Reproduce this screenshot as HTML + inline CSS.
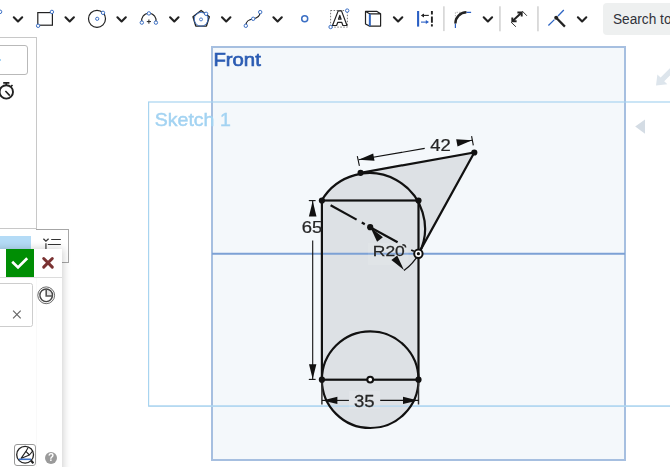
<!DOCTYPE html>
<html>
<head>
<meta charset="utf-8">
<title>Sketch</title>
<style>
html,body{margin:0;padding:0;}
body{width:670px;height:467px;overflow:hidden;background:#fff;position:relative;font-family:"Liberation Sans",sans-serif;}
#cv{position:absolute;left:0;top:0;width:670px;height:467px;will-change:transform;}
#help{will-change:transform;}
.abs{position:absolute;}
#toolbar{position:absolute;left:0;top:0;width:670px;height:37px;background:#fff;}
#search{position:absolute;left:603px;top:3px;width:80px;height:32px;background:#eef0f0;border-radius:4px;}
#search span{position:absolute;left:9.8px;top:6.5px;font-size:15.2px;color:#30323a;white-space:nowrap;transform:scaleX(0.9);transform-origin:0 0;}
#panel{position:absolute;left:-10px;top:37px;width:47px;height:192px;border:1px solid #c8c8c8;background:#fff;box-sizing:border-box;}
#inp1{position:absolute;left:-10px;top:45px;width:38px;height:30px;border:1px solid #b9b9b9;border-radius:3px;box-sizing:border-box;background:#fff;}
#tab{position:absolute;left:36px;top:229px;width:33px;height:34px;border:1px solid #a6a6a6;border-left:none;box-sizing:border-box;background:#fff;}
#bluebar{position:absolute;left:0;top:236px;width:31px;height:13px;background:#b4dbf6;}
#popup{position:absolute;left:-10px;top:249px;width:72px;height:230px;background:#fff;box-shadow:1px 0 8px rgba(0,0,0,0.2);}
#ok{position:absolute;left:6px;top:249px;width:28px;height:28px;background:#008e04;}
#sep{position:absolute;left:0;top:277px;width:62px;height:1px;background:#dcdcdc;}
#inp2{position:absolute;left:-10px;top:283px;width:43px;height:43.5px;border:1px solid #cdcdcd;border-radius:2.5px;box-sizing:border-box;background:#fff;}
#ibtn{position:absolute;left:14px;top:444px;width:22px;height:22px;border:1px solid #999;border-radius:3px;box-sizing:border-box;background:#fff;}
#help{position:absolute;left:45px;top:451.7px;width:12px;height:12px;border-radius:6px;background:#9a9a9a;color:#fff;font-size:10px;font-weight:bold;line-height:12px;text-align:center;}
</style>
</head>
<body>
<!-- ============ CANVAS ============ -->
<svg id="cv" width="670" height="467" viewBox="0 0 670 467">
  <!-- Front plane -->
  <rect x="212" y="47" width="413" height="413" fill="#f4f8fb" stroke="#a6bfe0" stroke-width="2"/>
  <!-- Sketch plane -->
  <rect x="148.6" y="102" width="540" height="304.1" fill="none" stroke="#a8d4f0" stroke-width="1.2"/>
  <text transform="translate(213.4,66.2) scale(1.07,1)" font-size="19" fill="#2b5cb3" stroke="#2b5cb3" stroke-width="0.7" font-family="Liberation Sans, sans-serif">Front</text>
  <text transform="translate(154.8,125.5) scale(1.085,1)" font-size="18" fill="#a3d3f2" stroke="#a3d3f2" stroke-width="0.45" font-family="Liberation Sans, sans-serif">Sketch 1</text>
  <!-- view arrows right -->
  <path d="M656 85.4 L657.4 74.6 L660.6 77.6 L670.6 67.6 L674.2 71.2 L664.2 81.2 L667.4 84.2 Z" fill="#dde5ec"/>
  <path d="M635.2 126.6 L645 119.6 L645 133.8 Z" fill="#d4dce4"/>

  <!-- filled regions -->
  <g fill="#dde1e5" stroke="none">
    <rect x="321.9" y="200.5" width="96.6" height="179.2"/>
    <circle cx="370.2" cy="379.7" r="48.3"/>
    <path d="M321.7 200.4 A55.5 55.5 0 0 1 418.9 253.9 Z"/>
    <path d="M360.6 172.8 L474.3 152.5 L418.5 253.6 L418.5 200 Z"/>
  </g>
  <!-- horizontal axis -->
  <line x1="212" y1="253.8" x2="625" y2="253.8" stroke="#7ca1d5" stroke-width="1.9"/>
  <!-- sketch bottom edge over fill -->
  <line x1="148.6" y1="406.1" x2="670" y2="406.1" stroke="#b0d6f0" stroke-width="1.3"/>

  <!-- geometry -->
  <g fill="none" stroke="#111" stroke-width="2.2" stroke-linecap="round">
    <rect x="321.9" y="200.5" width="96.6" height="179.2"/>
    <circle cx="370.2" cy="379.7" r="48.3"/>
    <path d="M321.7 200.4 A55.5 55.5 0 0 1 418.9 253.9"/>
    <path d="M360.6 172.8 L474.3 152.5 L418.5 253.6"/>
  </g>
  <!-- construction line -->
  <g stroke="#111" stroke-width="2.2" stroke-linecap="butt">
    <line x1="330.6" y1="205.2" x2="356.6" y2="219.6"/>
    <line x1="361.8" y1="222.5" x2="364.8" y2="224.2"/>
    <line x1="370.2" y1="227.2" x2="397.6" y2="242.2"/>
    <line x1="411.2" y1="249.9" x2="413.9" y2="251.3" stroke-width="1.7"/>
    <path d="M402.4 244.7 Q405.4 244.6 405.7 247.5" fill="none" stroke-width="1.5"/>
  </g>

  <!-- dimension 42 -->
  <g stroke="#111" stroke-width="1.1" fill="none">
    <line x1="357.3" y1="156.2" x2="359.4" y2="165.8"/>
    <line x1="471.6" y1="136.1" x2="473.3" y2="145.4"/>
    <line x1="358.6" y1="159.8" x2="424.7" y2="148.4"/>
    <line x1="457" y1="142.8" x2="472.1" y2="140.2"/>
  </g>
  <path d="M358.6 159.8 L373.2 153.5 L374.5 160.8 Z" fill="#111"/>
  <path d="M472.1 140.2 L457.5 146.5 L456.2 139.2 Z" fill="#111"/>
  <text transform="translate(440.5,151.1) scale(1.12,1)" font-size="16.5" text-anchor="middle" fill="#262626" stroke="#262626" stroke-width="0.25" font-family="Liberation Sans, sans-serif">42</text>

  <!-- dimension 65 -->
  <g stroke="#111" stroke-width="1.1" fill="none">
    <line x1="308.8" y1="200.6" x2="315.6" y2="200.6"/>
    <line x1="308.8" y1="379.4" x2="315.6" y2="379.4"/>
    <line x1="312.7" y1="200.6" x2="312.7" y2="214"/>
    <line x1="312.7" y1="240.6" x2="312.7" y2="379.4"/>
  </g>
  <path d="M312.7 201 L316.5 216.4 L308.9 216.4 Z" fill="#111"/>
  <path d="M312.7 379 L309.0 364.2 L316.4 364.2 Z" fill="#111"/>
  <text transform="translate(312.1,232.5) scale(1.12,1)" font-size="16.5" text-anchor="middle" fill="#262626" stroke="#262626" stroke-width="0.25" font-family="Liberation Sans, sans-serif">65</text>

  <!-- dimension 35 -->
  <rect x="349" y="391" width="31" height="18" fill="rgba(255,255,255,0.12)"/>
  <g stroke="#111" stroke-width="1.1" fill="none">
    <line x1="321.9" y1="381" x2="321.9" y2="404.5" stroke="#333" stroke-width="1.5"/>
    <line x1="418.5" y1="381" x2="418.5" y2="404.5" stroke="#333" stroke-width="1.5"/>
    <line x1="322" y1="400.4" x2="348.9" y2="400.4"/>
    <line x1="380.2" y1="400.4" x2="418.5" y2="400.4"/>
  </g>
  <path d="M322.4 400.4 L337.4 396.8 L337.4 404.0 Z" fill="#111"/>
  <path d="M418 400.4 L403 404.0 L403 396.8 Z" fill="#111"/>
  <text transform="translate(364.3,406.6) scale(1.08,1)" font-size="17.2" text-anchor="middle" fill="#262626" stroke="#262626" stroke-width="0.25" font-family="Liberation Sans, sans-serif">35</text>

  <!-- R20 -->
  <path d="M418.9 253.9 A55.5 55.5 0 0 1 404 270.6" fill="none" stroke="#111" stroke-width="1.2"/>
  <rect x="368" y="243" width="40.5" height="22" fill="rgba(255,255,255,0.1)"/>
  <path d="M370.4 227.3 L382.9 237.2 L377.1 241.8 Z" fill="#111"/>
  <path d="M403.9 270.0 L391.4 260.1 L397.2 255.5 Z" fill="#111"/>
  <text transform="translate(388.8,256.2) scale(1.14,1)" font-size="15.3" text-anchor="middle" fill="#262626" stroke="#262626" stroke-width="0.25" font-family="Liberation Sans, sans-serif">R20</text>

  <!-- points -->
  <g fill="#111">
    <circle cx="321.9" cy="200.5" r="3.1"/>
    <circle cx="418.5" cy="200.5" r="3.1"/>
    <circle cx="360.6" cy="172.8" r="3.1"/>
    <circle cx="474.3" cy="152.5" r="3.1"/>
    <circle cx="370.2" cy="227.2" r="3.1"/>
    <circle cx="321.9" cy="379.7" r="3.1"/>
    <circle cx="418.5" cy="379.7" r="3.1"/>
  </g>
  <circle cx="370.2" cy="379.6" r="2.9" fill="#fff" stroke="#111" stroke-width="2.1"/>
  <!-- origin -->
  <circle cx="418.4" cy="253.7" r="4.2" fill="#fff" stroke="#111" stroke-width="2"/>
  <circle cx="418.4" cy="253.7" r="1.6" fill="#111"/>
</svg>

<!-- ============ TOOLBAR ============ -->
<div id="toolbar"></div>
<div id="search"><span>Search tools...</span></div>
<svg class="abs" style="left:0;top:0" width="670" height="37" viewBox="0 0 670 37">
  <defs>
    <path id="chev" d="M-4.2 -2.2 L0 2 L4.2 -2.2" fill="none" stroke="#222" stroke-width="2.1" stroke-linecap="round" stroke-linejoin="round"/>
  </defs>
  <use href="#chev" x="18" y="19.5"/>
  <use href="#chev" x="69.7" y="19.5"/>
  <use href="#chev" x="121.6" y="19.5"/>
  <use href="#chev" x="174.3" y="19.5"/>
  <use href="#chev" x="226.2" y="19.5"/>
  <use href="#chev" x="277.6" y="19.5"/>
  <use href="#chev" x="398.1" y="19.5"/>
  <use href="#chev" x="487.9" y="19.5"/>
  <use href="#chev" x="582.1" y="19.5"/>
  <!-- partial icon at far left -->
  <circle cx="0" cy="11.8" r="1.8" fill="#fff" stroke="#3b6fc4" stroke-width="1"/>
  <!-- rectangle -->
  <rect x="37.8" y="12.6" width="14.6" height="12.6" fill="none" stroke="#222" stroke-width="1.2"/>
  <circle cx="51.9" cy="11.9" r="1.7" fill="#fff" stroke="#3b6fc4" stroke-width="1"/>
  <circle cx="38.1" cy="25.8" r="1.7" fill="#fff" stroke="#3b6fc4" stroke-width="1"/>
  <!-- circle -->
  <circle cx="97" cy="18.8" r="8.5" fill="none" stroke="#222" stroke-width="1.2"/>
  <circle cx="97.2" cy="18.8" r="1.6" fill="#fff" stroke="#3b6fc4" stroke-width="1"/>
  <circle cx="103" cy="12.8" r="1.7" fill="#fff" stroke="#3b6fc4" stroke-width="1"/>
  <!-- arc -->
  <path d="M141.8 22.5 A7.3 7.3 0 1 1 155.9 22.5" fill="none" stroke="#222" stroke-width="1.1"/>
  <circle cx="141.8" cy="22.6" r="1.7" fill="#fff" stroke="#3b6fc4" stroke-width="1"/>
  <circle cx="155.9" cy="22.6" r="1.7" fill="#fff" stroke="#3b6fc4" stroke-width="1"/>
  <circle cx="148.9" cy="13.4" r="1.7" fill="#fff" stroke="#3b6fc4" stroke-width="1"/>
  <path d="M146.8 21.6 H151 M148.9 19.5 V23.7" stroke="#222" stroke-width="1" fill="none"/>
  <!-- polygon -->
  <path d="M201.1 10.5 L209.3 16.8 L206.4 26.1 L195.8 26.1 L193 16.8 Z" fill="none" stroke="#222" stroke-width="1.4" stroke-linejoin="round"/>
  <circle cx="201.1" cy="19.3" r="6.9" fill="none" stroke="#3b6fc4" stroke-width="0.9"/>
  <circle cx="201" cy="19.4" r="1.5" fill="#fff" stroke="#3b6fc4" stroke-width="0.9"/>
  <circle cx="206.1" cy="13.8" r="1.7" fill="#fff" stroke="#3b6fc4" stroke-width="1"/>
  <!-- spline -->
  <path d="M245.9 25.6 C246 20.5 249 19.4 253.1 18.8 C257.5 18.2 259.8 16.5 260.1 12.2" fill="none" stroke="#222" stroke-width="1.2"/>
  <circle cx="245.8" cy="25.8" r="1.7" fill="#fff" stroke="#3b6fc4" stroke-width="1"/>
  <circle cx="253.2" cy="18.8" r="1.7" fill="#fff" stroke="#3b6fc4" stroke-width="1"/>
  <circle cx="260.2" cy="12.1" r="1.7" fill="#fff" stroke="#3b6fc4" stroke-width="1"/>
  <!-- point -->
  <circle cx="304.7" cy="18.8" r="3" fill="#fff" stroke="#3b6fc4" stroke-width="1.5"/>
  <!-- text -->
  <rect x="330.6" y="10.5" width="16.8" height="16.6" fill="none" stroke="#555" stroke-width="0.8" stroke-dasharray="1.5 1.5"/>
  <path d="M332.5 25.5 L338.2 10.9 L341.5 10.9 L347 25.5 L342.9 25.5 L341.7 22.3 L337.8 22.3 L336.6 25.5 Z M338.5 19.2 L339.8 15.4 L341.1 19.2 Z" fill="#fff" fill-rule="evenodd" stroke="#222" stroke-width="1.2" stroke-linejoin="round"/>
  <circle cx="347.2" cy="10.6" r="1.7" fill="#fff" stroke="#3b6fc4" stroke-width="1"/>
  <circle cx="330.6" cy="27" r="1.7" fill="#fff" stroke="#3b6fc4" stroke-width="1"/>
  <!-- use/cube -->
  <path d="M365.5 11.4 L377 11.4 L380.6 13.8 L380.6 26.1 L369.7 26.1 L365.5 24 Z M365.5 11.4 L369.7 13.8 L380.6 13.8 M369.7 13.8 L369.7 26.1" fill="none" stroke="#222" stroke-width="1.2" stroke-linejoin="round"/>
  <path d="M369.8 14 L369.8 26" stroke="#2f66c4" stroke-width="1.9"/>
  <!-- linear pattern -->
  <path d="M418.1 11 V26.6" stroke="#2a5fc4" stroke-width="2.1" fill="none"/>
  <path d="M431.9 11 V14.5 M431.9 16.4 V22.8 M431.9 24.2 V26.6" stroke="#222" stroke-width="1.9" fill="none"/>
  <path d="M422 15.4 H428.8" stroke="#222" stroke-width="1.1" fill="none"/>
  <path d="M420.8 15.4 L424 13.4 L424 17.4 Z" fill="#222"/>
  <path d="M421 22.1 H427.6" stroke="#2a5fc4" stroke-width="1.1" fill="none"/>
  <path d="M429 22.1 L425.8 20.1 L425.8 24.1 Z" fill="#2a5fc4"/>
  <!-- separators -->
  <rect x="443.2" y="6.3" width="1.4" height="24.8" fill="#cfcfcf"/>
  <rect x="499.3" y="6.3" width="1.3" height="25" fill="#c9c9c9"/>
  <rect x="537.3" y="6.3" width="1.3" height="25" fill="#c9c9c9"/>
  <!-- fillet -->
  <path d="M455.4 21.5 V12.3 H464" stroke="#888" stroke-width="0.7" stroke-dasharray="1.3 1.3" fill="none"/>
  <path d="M455.4 27.9 V23.5 M466.4 12.3 H471.1" stroke="#2a5fc4" stroke-width="1.2" fill="none"/>
  <path d="M455.4 23.5 A11.1 11.1 0 0 1 466.4 12.3" stroke="#222" stroke-width="2.4" fill="none"/>
  <!-- transform -->
  <path d="M512.6 21 L521.4 12.8" stroke="#222" stroke-width="2" fill="none"/>
  <path d="M512.3 17.4 V21.3 H516.6 M517.4 12.5 H521.7 V16.6" stroke="#222" stroke-width="1.9" fill="none" stroke-linejoin="miter"/>
  <path d="M511 22.1 L515.9 26.8 M522.2 11 L526.9 15.8" stroke="#222" stroke-width="0.9" fill="none"/>
  <!-- trim -->
  <path d="M548.4 25.5 L554.4 19.6 M558 16 L563.8 10" stroke="#2f66c4" stroke-width="1.3" fill="none"/>
  <path d="M556.2 17.8 L564.9 26.6" stroke="#222" stroke-width="2.3" fill="none"/>
  <circle cx="556.2" cy="17.8" r="2" fill="#222"/>
</svg>

<!-- ============ LEFT PANEL ============ -->
<div id="panel"></div>
<div id="inp1"></div>
<div class="abs" style="left:0;top:59px;width:1px;height:1.5px;background:#a8d4f3;"></div>
<svg class="abs" style="left:0;top:80px" width="20" height="24" viewBox="0 80 20 24">
  <circle cx="6.3" cy="91.9" r="6.7" fill="none" stroke="#222" stroke-width="1.9"/>
  <path d="M3.2 82.9 H9.4 M6.3 82.9 V85.5 M5.4 91 L9.8 95.6 M10.9 86.6 L12.5 85" stroke="#222" stroke-width="1.6" fill="none"/>
</svg>
<div id="tab"></div>
<svg class="abs" style="left:36px;top:229px" width="34" height="34" viewBox="36 229 34 34">
  <path d="M51.2 239.5 H60.8 M47.8 244.5 H60.8" stroke="#333" stroke-width="1.2" fill="none"/>
  <path d="M43.4 238.8 L45.9 241.2 L48.6 238.8" stroke="#333" stroke-width="1.3" fill="none"/>
  <path d="M45.9 243.2 V249" stroke="#777" stroke-width="1.8" fill="none"/>
</svg>
<div id="bluebar"></div>
<div id="popup"></div>
<div class="abs" style="left:36px;top:278px;width:1px;height:189px;background:#f9f9f9;"></div>
<div id="ok"></div>
<div id="sep"></div>
<div id="inp2"></div>
<svg class="abs" style="left:0;top:249px" width="64" height="80" viewBox="0 249 64 80">
  <path d="M12.2 261.8 L18 267.4 L27.2 258.2" fill="none" stroke="#fff" stroke-width="2.7" stroke-linecap="butt" stroke-linejoin="miter"/>
  <path d="M43.7 258.5 L52.3 267.1 M52.3 258.5 L43.7 267.1" fill="none" stroke="#7a3232" stroke-width="3" stroke-linecap="round"/>
  <path d="M46.2 295.9 V289 A6.6 6.6 0 0 1 52.8 295.9 Z" fill="#e6e6e6"/>
  <circle cx="46.2" cy="295.3" r="8.4" fill="none" stroke="#444" stroke-width="0.8"/>
  <circle cx="46.2" cy="295.3" r="6.3" fill="none" stroke="#444" stroke-width="1.4"/>
  <path d="M46.2 289.4 V296 H52.5" fill="none" stroke="#555" stroke-width="1.6"/>
  <path d="M13.1 310.7 L20.7 318.3 M20.7 310.7 L13.1 318.3" fill="none" stroke="#666" stroke-width="1.2"/>
</svg>
<div id="ibtn"></div>
<svg class="abs" style="left:14px;top:444px" width="24" height="23" viewBox="14 444 24 23">
  <circle cx="25.1" cy="454.7" r="8.4" fill="none" stroke="#222" stroke-width="1.3"/>
  <path d="M31 460.6 L33.4 463.2" stroke="#222" stroke-width="2.2" fill="none"/>
  <path d="M20.9 458.6 L25.9 451.4 L28.3 447.2 M20.9 458.6 L29.4 455 L32.8 450.8 M25.9 451.4 L29.4 455" stroke="#222" stroke-width="1.1" fill="none" stroke-linejoin="round"/>
  <path d="M18.9 459.3 H31" stroke="#3b6fc4" stroke-width="1.6" fill="none"/>
</svg>
<div id="help">?</div>
</body>
</html>
